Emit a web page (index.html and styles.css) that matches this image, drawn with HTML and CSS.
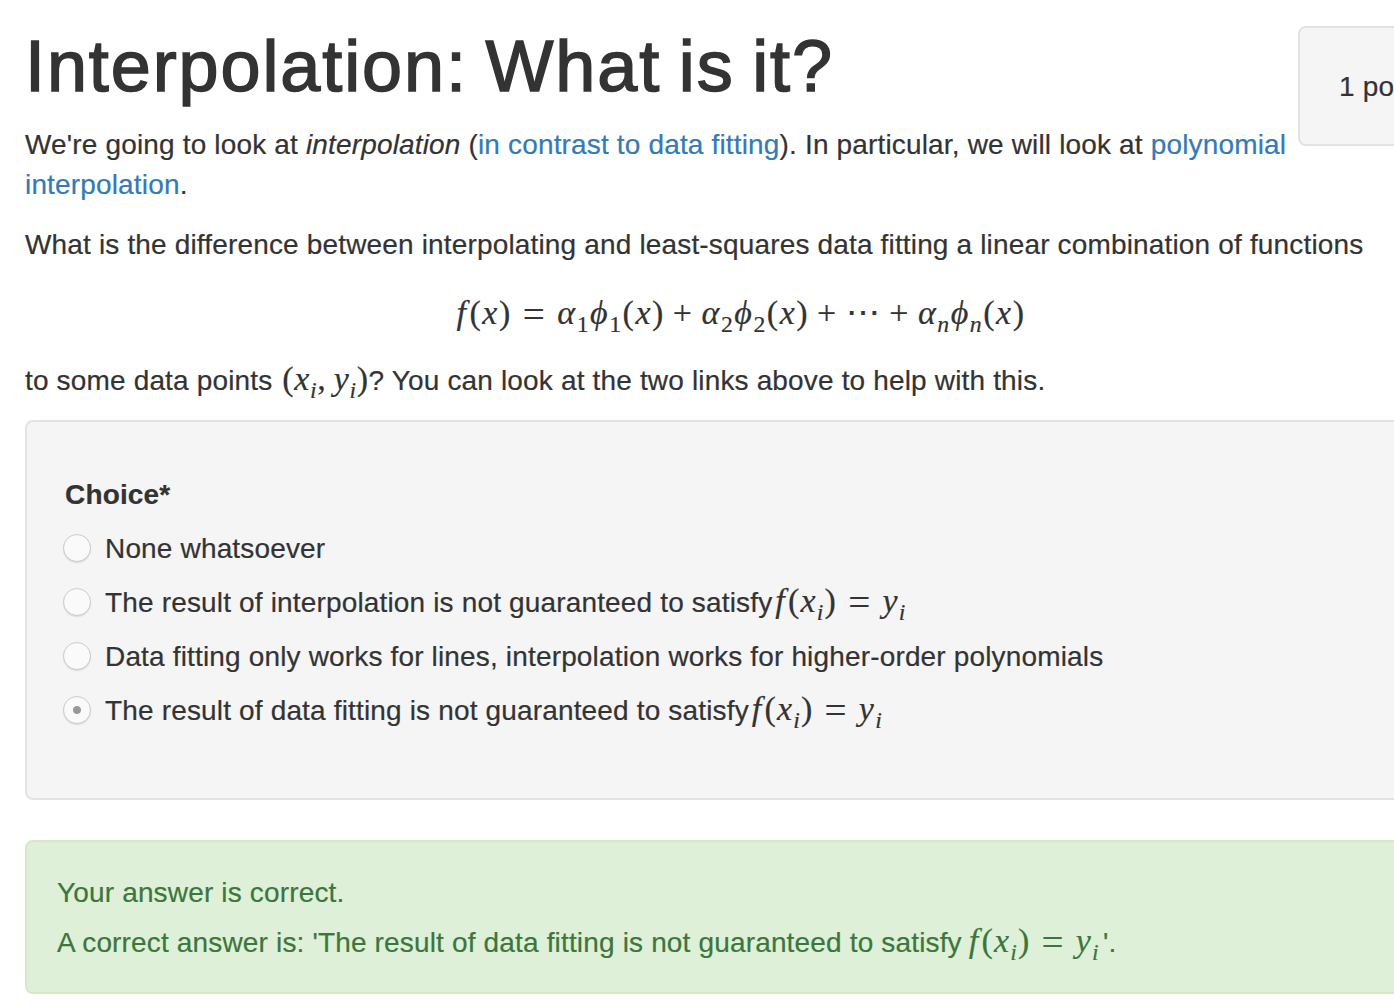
FILE: index.html
```html
<!DOCTYPE html>
<html lang="en">
	<head>
		<meta charset="utf-8">
		<meta name="viewport" content="width=device-width, initial-scale=1.0">
		<title>Interpolation: What is it?</title>
		<link rel="stylesheet" href="styles.css">
	</head>

	<body>
		<main class="page">
			<aside class="points">1 point</aside>
			<h1>Interpolation: What is it?</h1>

			<p>We're going to look at <em>interpolation</em> (<a href="#">in contrast to data fitting</a>). In particular, we will look at <a href="#">polynomial interpolation</a>.</p>
			<p>What is the difference between interpolating and least-squares data fitting a linear combination of functions</p>

			<div class="display-math">
				<span class="math"><i class="fn">f</i>(<i>x</i>)<span class="rel">=</span><i>α</i><sub>1</sub><i>ϕ</i><sub>1</sub>(<i>x</i>)<span class="bin">+</span><i>α</i><sub>2</sub><i>ϕ</i><sub>2</sub>(<i>x</i>)<span class="bin">+</span>⋯<span class="bin">+</span><i>α</i><sub><i>n</i></sub><i>ϕ</i><sub><i>n</i></sub>(<i>x</i>)</span>
			</div>

			<p class="data-points">to some data points <span class="math">(<i>x</i><sub><i>i</i></sub>,&#8201;<i>y</i><sub><i>i</i></sub>)</span>? You can look at the two links above to help with this.</p>

			<form class="well">
				<div class="field-label">Choice*</div>
				<label class="choice"><input type="radio" name="choice" disabled><span>None whatsoever</span></label>
				<label class="choice"><input type="radio" name="choice" disabled><span>The result of interpolation is not guaranteed to satisfy <span class="math"><i class="fn">f</i>(<i>x</i><sub><i>i</i></sub>)<span class="rel">=</span><i>y</i><sub><i>i</i></sub></span></span></label>
				<label class="choice"><input type="radio" name="choice" disabled><span>Data fitting only works for lines, interpolation works for higher-order polynomials</span></label>
				<label class="choice"><input type="radio" name="choice" checked disabled><span>The result of data fitting is not guaranteed to satisfy <span class="math"><i class="fn">f</i>(<i>x</i><sub><i>i</i></sub>)<span class="rel">=</span><i>y</i><sub><i>i</i></sub></span></span></label>
			</form>

			<div class="alert-success">
				<p>Your answer is correct.</p>
				<p>A correct answer is: 'The result of data fitting is not guaranteed to satisfy <span class="math"><i class="fn">f</i>(<i>x</i><sub><i>i</i></sub>)<span class="rel">=</span><i>y</i><sub><i>i</i></sub></span>'.</p>
			</div>
		</main>
	</body>
</html>
```

FILE: styles.css
```css
html, body{
	margin: 0;
	height: 100%;
	overflow: hidden;
	background-color: white;
}
body{
	font-family: "Liberation Sans", Arial, sans-serif;
	font-size: 28px;
	line-height: 40px;
	letter-spacing: .16px;
	-webkit-text-stroke: .2px;
	color: #333;
}
.page{
	width: 1432px;
	padding-left: 25px;
}
h1{
	margin: 0 0 19px;
	padding-top: 27px;
	font-size: 72px;
	font-weight: 500;
	line-height: 79px;
	letter-spacing: 1.9px;
	word-spacing: -4.3px;
	-webkit-text-stroke: 1.5px;
}
p{
	margin: 0 0 20px;
}
a{
	color: #337ab7;
	text-decoration: none;
}
.points{
	float: right;
	box-sizing: border-box;
	width: 159px;
	height: 120px;
	margin-top: 26px;
	padding: 39px 0 39px 39px;
	white-space: nowrap;
	background-color: #f5f5f5;
	border: 2px solid #e3e3e3;
	border-radius: 8px;
}
.math{
	font-family: "Liberation Serif", "DejaVu Serif", serif;
	font-size: 34px;
	line-height: 0;
	letter-spacing: 1.2px;
	white-space: nowrap;
}
.math sub{
	font-size: 70%;
	line-height: 0;
}
.fn{
	margin-right: 2px;
}
.rel{
	margin: 0 11px;
	font-size: 1.15em;
	vertical-align: -4px;
}
.bin{
	margin: 0 8px;
}
.display-math{
	text-align: center;
	margin: 30px 0 26px;
}
.display-math .math{
	letter-spacing: 1.5px;
}
.data-points{
	margin-bottom: 19px;
}
.data-points .math{
	margin-left: 2px;
	letter-spacing: .6px;
}
.well{
	box-sizing: border-box;
	height: 380px;
	margin-bottom: 40px;
	padding: 38px;
	background-color: #f5f5f5;
	border: 2px solid #e3e3e3;
	border-radius: 8px;
}
.field-label{
	font-weight: bold;
	margin: 15px 0 13px;
}
.choice{
	display: flex;
	align-items: center;
	gap: 14px;
	height: 40px;
	margin-bottom: 14px;
}
.choice > span{
	padding-top: 2px;
}
.choice .math{
	margin-left: -5px;
}
.choice input{
	appearance: none;
	box-sizing: border-box;
	flex: none;
	width: 28px;
	height: 28px;
	margin: 0 0 0 -2px;
	background-color: #fafafa;
	border: 1px solid #ccc;
	border-radius: 50%;
	box-shadow: 0 1px 1px rgba(0,0,0,.1);
}
.choice input:checked{
	background-image: radial-gradient(circle, #999 0, #999 3.5px, transparent 4.5px);
}
.alert-success{
	box-sizing: border-box;
	height: 154px;
	padding: 31px 30px 29px;
	color: #3c763d;
	background-color: #dff0d8;
	border: 2px solid #d6e9c6;
	border-radius: 8px;
}
.alert-success p{
	margin-bottom: 10px;
}
.alert-success .math{
	margin: 0 3px 0 -1px;
}
```
